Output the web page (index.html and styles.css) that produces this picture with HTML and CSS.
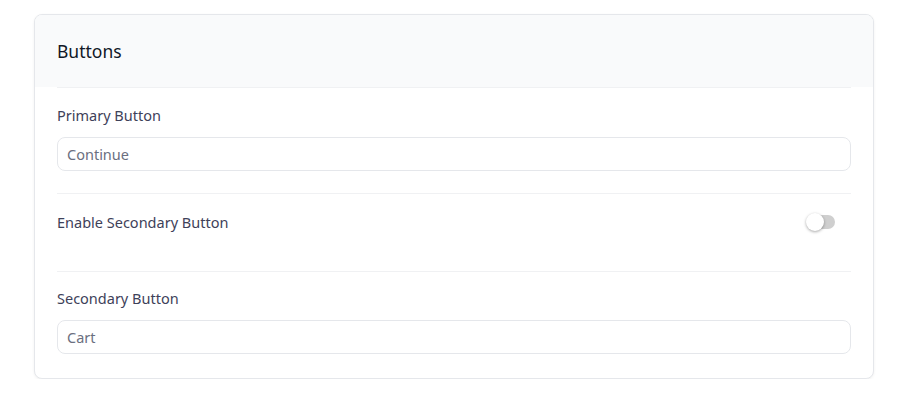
FILE: index.html
```html
<!DOCTYPE html>
<html lang="en">
<head>
  <meta charset="UTF-8">
  <meta name="viewport" content="width=device-width, initial-scale=1.0">
  <title>Buttons</title>
  <link rel="stylesheet" href="styles.css">
</head>
<body>
  <div class="card">
    <div class="card-header">
      <h2>Buttons</h2>
    </div>
    <div class="card-body">
      <div class="field">
        <label for="primary">Primary Button</label>
        <input type="text" id="primary" value="Continue">
      </div>
      <div class="field field-toggle">
        <span class="toggle-label">Enable Secondary Button</span>
        <label class="switch">
          <input type="checkbox">
          <span class="track"></span>
          <span class="knob"></span>
        </label>
      </div>
      <div class="field field-last">
        <label for="secondary">Secondary Button</label>
        <input type="text" id="secondary" value="Cart">
      </div>
    </div>
  </div>
</body>
</html>
```

FILE: styles.css
```css
body {
  margin: 0;
  padding: 14px 43px 0 34px;
  background: #ffffff;
  font-family: "Noto Sans", "Open Sans", Arial, sans-serif;
  color: #374151;
}
.card {
  width: 840px;
  box-sizing: border-box;
  background: #ffffff;
  border: 1px solid #e5e7eb;
  border-radius: 8px;
  box-shadow: 0 1px 3px rgba(0,0,0,0.06);
  overflow: hidden;
}
.card-header {
  background: #f9fafb;
  height: 72px;
  padding: 0 22px;
  display: flex;
  align-items: center;
}
h2 {
  margin: 0;
  font-size: 17.5px;
  font-weight: 400;
  color: #111827;
}
.card-body {
  padding: 0 22px;
}
.field {
  border-top: 1px solid #f0f1f3;
  padding: 17px 0 22px;
}
.field label,
.toggle-label {
  display: block;
  font-size: 14.5px;
  line-height: 20px;
  margin-bottom: 12px;
  color: #3e4159;
}
.field input[type="text"] {
  display: block;
  width: 100%;
  box-sizing: border-box;
  height: 34px;
  padding: 0 9px;
  border: 1px solid #e5e7eb;
  border-radius: 8px;
  font-family: inherit;
  font-size: 14.5px;
  color: #6b6f80;
  outline: none;
}
.field-toggle {
  display: flex;
  justify-content: space-between;
  align-items: flex-start;
  padding: 18px 16px 39px 0;
}
.field-toggle .toggle-label {
  margin: 0;
}
.field-last {
  padding: 16px 0 24px;
}
.field-last label {
  margin-bottom: 12px;
}
.field .switch {
  position: relative;
  display: block;
  width: 29px;
  height: 20px;
  margin: 0;
}
.switch input {
  display: none;
}
.track {
  position: absolute;
  left: 4px;
  top: 3px;
  width: 25px;
  height: 14px;
  border-radius: 7px;
  background: #cfcfcf;
}
.knob {
  position: absolute;
  left: 0;
  top: 1px;
  width: 18px;
  height: 18px;
  border-radius: 50%;
  background: #ffffff;
  box-shadow: 0 1px 3px rgba(0,0,0,0.35);
}
```
